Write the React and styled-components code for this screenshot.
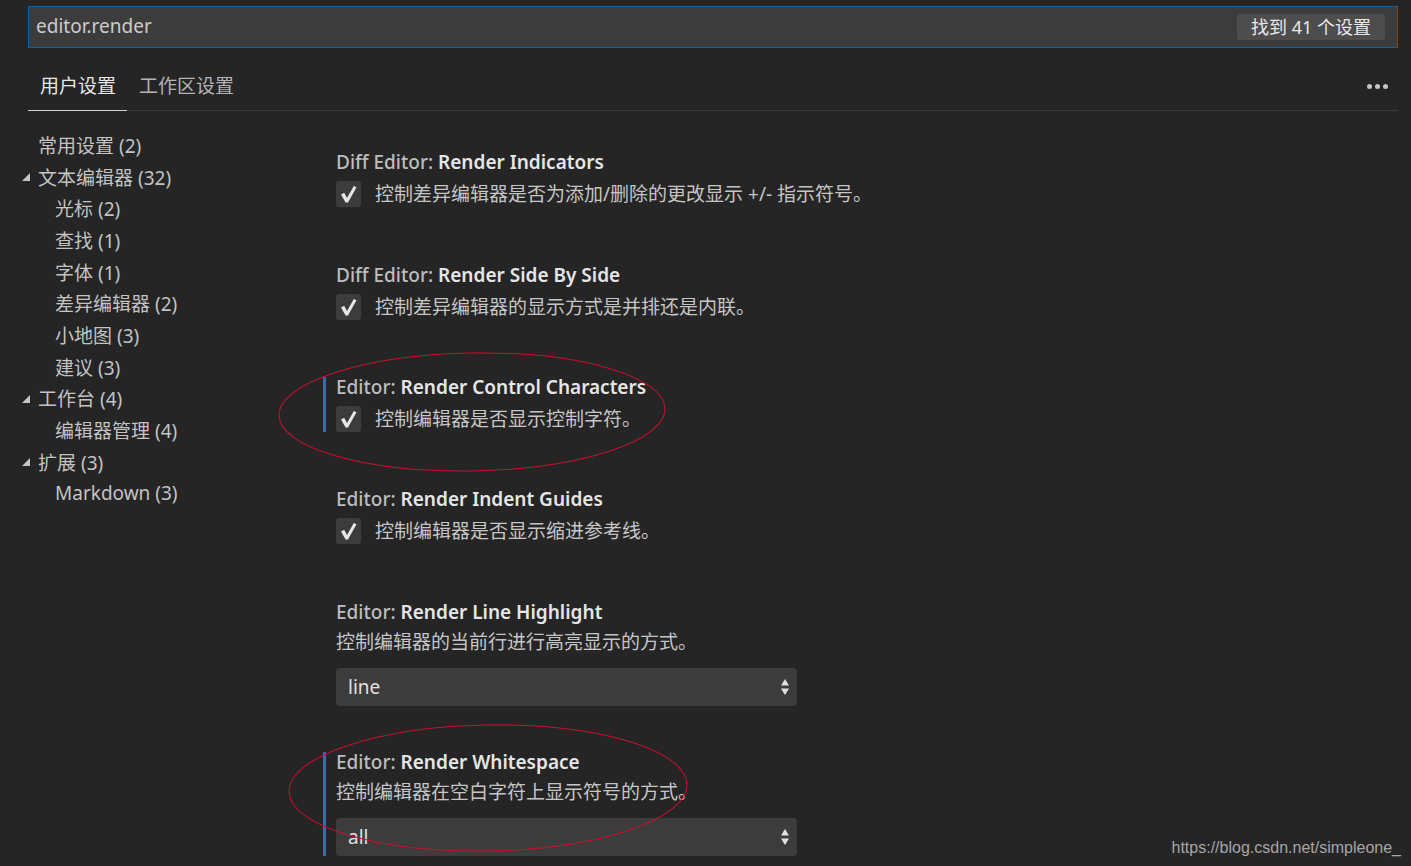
import styled, { createGlobalStyle } from "styled-components"

const GlobalStyle = createGlobalStyle`
    html, body{
        margin: 0;
        padding: 0;
        background: #252526;
        overflow: hidden;
    }
    body{
        font-family: "Noto Sans", "Noto Sans CJK SC", sans-serif;
        color: #cccccc;
    }
`

const tree = [
    { label: "常用设置 (2)", depth: 0 },
    { label: "文本编辑器 (32)", depth: 0, open: true },
    { label: "光标 (2)", depth: 1 },
    { label: "查找 (1)", depth: 1 },
    { label: "字体 (1)", depth: 1 },
    { label: "差异编辑器 (2)", depth: 1 },
    { label: "小地图 (3)", depth: 1 },
    { label: "建议 (3)", depth: 1 },
    { label: "工作台 (4)", depth: 0, open: true },
    { label: "编辑器管理 (4)", depth: 1 },
    { label: "扩展 (3)", depth: 0, open: true },
    { label: "Markdown (3)", depth: 1 },
]

// space = 위 항목과의 간격(px)
const settings = [
    { cat: "Diff Editor: ", name: "Render Indicators", kind: "check", desc: "控制差异编辑器是否为添加/删除的更改显示 +/- 指示符号。", space: 0 },
    { cat: "Diff Editor: ", name: "Render Side By Side", kind: "check", desc: "控制差异编辑器的显示方式是并排还是内联。", space: 58 },
    { cat: "Editor: ", name: "Render Control Characters", kind: "check", desc: "控制编辑器是否显示控制字符。", space: 57, modified: true },
    { cat: "Editor: ", name: "Render Indent Guides", kind: "check", desc: "控制编辑器是否显示缩进参考线。", space: 57 },
    { cat: "Editor: ", name: "Render Line Highlight", kind: "select", desc: "控制编辑器的当前行进行高亮显示的方式。", value: "line", space: 58 },
    { cat: "Editor: ", name: "Render Whitespace", kind: "select", desc: "控制编辑器在空白字符上显示符号的方式。", value: "all", space: 46, modified: true },
]

function CheckMark(){
    return(
        <svg width="25" height="26" viewBox="0 0 25 26">
            <path d="M5 13.5 L8.2 11.8 L11 17 L17.8 5 L20.5 6.3 L12 21.5 L9.6 21.5 Z" fill="#e6e6e6" />
        </svg>
    )
}

function Arrows(){
    return(
        <svg width="10" height="20" viewBox="0 0 10 20">
            <path d="M5 2 L9 8.5 L1 8.5 Z" fill="#e0e0e0" />
            <path d="M5 18 L9 11.5 L1 11.5 Z" fill="#e0e0e0" />
        </svg>
    )
}

function SettingItem({item}){
    return(
        <Item $modified={item.modified} $space={item.space}>
            <Title><span className="cat">{item.cat}</span>{item.name}</Title>
            {item.kind === "check" ? (
                <CheckRow>
                    <CheckBox><CheckMark /></CheckBox>
                    <Desc>{item.desc}</Desc>
                </CheckRow>
            ) : (
                <>
                    <Desc className="block">{item.desc}</Desc>
                    <Select>
                        <span>{item.value}</span>
                        <Arrows />
                    </Select>
                </>
            )}
        </Item>
    )
}

export default function App(){
    return(
        <Page>
            <GlobalStyle />
            <Header>
                <SearchBox>
                    <span>editor.render</span>
                    <Badge>找到 41 个设置</Badge>
                </SearchBox>
                <TabBar>
                    <Tab $active>用户设置</Tab>
                    <Tab>工作区设置</Tab>
                    <More><i /><i /><i /></More>
                </TabBar>
            </Header>
            <Body>
                <Tree>
                    {tree.map((node,index)=>(
                        <TreeRow key={index} $depth={node.depth}>
                            <Twistie>{node.open && <svg width="8" height="8" viewBox="0 0 8 8"><path d="M8 0 L8 8 L0 8 Z" fill="#c5c5c5" /></svg>}</Twistie>
                            {node.label}
                        </TreeRow>
                    ))}
                </Tree>
                <List>
                    {settings.map((item,index)=>(
                        <SettingItem key={index} item={item} />
                    ))}
                </List>
            </Body>
            <Marks width="1411" height="866">
                <ellipse cx="472" cy="412" rx="193" ry="59" transform="rotate(-1 472 412)" />
                <ellipse cx="488" cy="788" rx="199" ry="63" transform="rotate(-1 488 788)" />
            </Marks>
            <Watermark>https://blog.csdn.net/simpleone_</Watermark>
        </Page>
    )
}

const Page = styled.div`
    position: relative;
    width: 1411px;
    height: 866px;
    overflow: hidden;
    background: #252526;
`

const Header = styled.div`
    padding: 6px 13px 0 28px;
`

const SearchBox = styled.div`
    height: 40px;
    display: flex;
    align-items: center;
    justify-content: space-between;
    padding: 0 12px 0 7px;
    background: #3c3c3c;
    border: 1px solid #13609c;
    font-size: 19px;
    color: #cccccc;
    span{ margin-top: -3px; }
`

const Badge = styled.div`
    height: 26px;
    line-height: 26px;
    padding: 0 14px;
    border-radius: 3px;
    background: #4d4d4d;
    color: #e8e8e8;
    font-size: 18px;
`

const TabBar = styled.div`
    margin-top: 14px;
    height: 48px;
    display: flex;
    align-items: stretch;
    border-bottom: 1px solid #3a3a3a;
`

const Tab = styled.div`
    display: flex;
    align-items: center;
    padding: 0 11px 2px 12px;
    font-size: 19px;
    color: ${props => props.$active ? "#e7e7e7" : "#b4b4b4"};
    margin-bottom: -1px;
    border-bottom: 1px solid ${props => props.$active ? "#d0d0d0" : "transparent"};
`

const More = styled.div`
    margin-left: auto;
    margin-right: 10px;
    display: flex;
    align-items: center;
    gap: 3px;
    i{
        width: 5px;
        height: 5px;
        border-radius: 50%;
        background: #c5c5c5;
    }
`

const Body = styled.div`
    display: flex;
`

const Tree = styled.div`
    width: 323px;
    padding-top: 18px;
    flex-shrink: 0;
`

const TreeRow = styled.div`
    height: 31.7px;
    display: flex;
    align-items: center;
    padding-left: ${props => 20 + props.$depth * 17}px;
    font-size: 19px;
    color: #c3c3c3;
`

const Twistie = styled.span`
    width: 18px;
    display: flex;
    align-items: center;
    svg{ margin-left: 2px; margin-top: 1px; }
`

const List = styled.div`
    padding-top: 41px;
    display: flex;
    flex-direction: column;
`

const Item = styled.div`
    margin-top: ${props => props.$space}px;
    padding-left: 10px;
    border-left: 3px solid ${props => props.$modified ? "#1b7aa6" : "transparent"};
    width: 461px;
`

const Title = styled.div`
    height: 20px;
    line-height: 20px;
    font-size: 19px;
    font-weight: 600;
    color: #e6e6e6;
    white-space: nowrap;
    .cat{
        font-weight: 500;
        color: #bdbdbd;
    }
`

const CheckRow = styled.div`
    margin-top: 9px;
    display: flex;
    align-items: center;
    gap: 14px;
    white-space: nowrap;
`

const CheckBox = styled.div`
    width: 25px;
    height: 26px;
    border-radius: 3px;
    background: #3c3c3c;
    display: flex;
    align-items: center;
    justify-content: center;
`

const Desc = styled.div`
    font-size: 19px;
    line-height: 20px;
    color: #c5c5c5;
    white-space: nowrap;
    &.block{
        margin-top: 10px;
    }
`

const Select = styled.div`
    margin-top: 16px;
    height: 38px;
    border-radius: 4px;
    background: #3c3c3c;
    display: flex;
    align-items: center;
    justify-content: space-between;
    padding: 0 7px 0 12px;
    font-size: 19px;
    color: #e0e0e0;
`

const Marks = styled.svg`
    position: absolute;
    left: 0;
    top: 0;
    pointer-events: none;
    ellipse{
        fill: none;
        stroke: #c8102e;
        stroke-width: 1;
    }
`

const Watermark = styled.div`
    position: absolute;
    right: 10px;
    bottom: 9px;
    font-family: "Liberation Sans", Arial, sans-serif;
    font-size: 16px;
    color: #a6a6a6;
`
